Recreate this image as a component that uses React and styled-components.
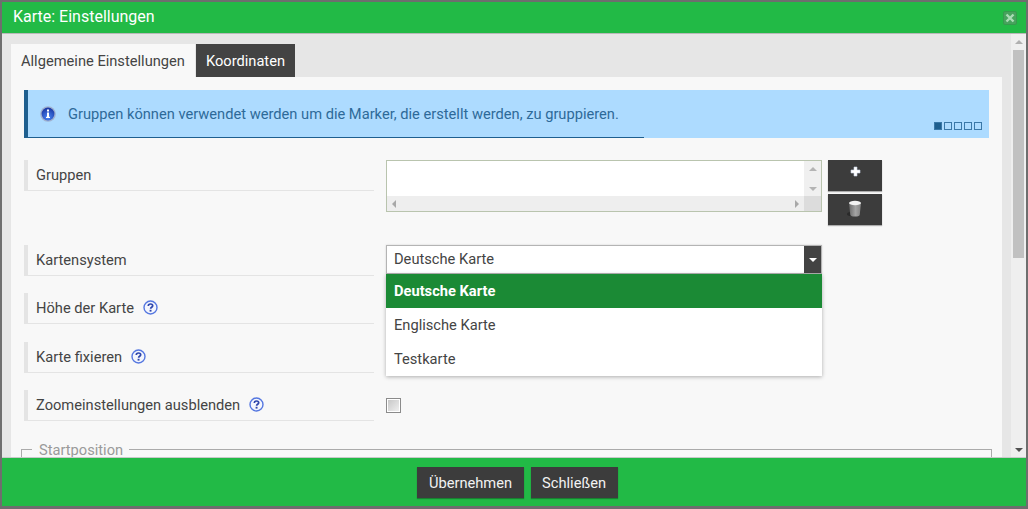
import styled, { createGlobalStyle } from "styled-components";

const GlobalStyle = createGlobalStyle`
html, body { margin: 0; padding: 0; height: 100%; overflow: hidden; }
* { box-sizing: border-box; }
body { font-family: Roboto, "Liberation Sans", sans-serif; font-size: 14.67px; color: #444; }
`

const Dialog = styled.div`
width: 1028px;
height: 509px;
display: flex;
flex-direction: column;
border: solid #6e6e6e;
border-width: 2px 2px 3px 2px;
overflow: hidden;
`

const TitleBar = styled.div`
height: 32px;
flex: none;
background: #22ba46;
border-bottom: 1px solid #b9b9b9;
color: #fff;
display: flex;
align-items: center;
justify-content: space-between;
padding: 0 9px 2px 11px;
font-size: 16px;
`

const CloseBox = styled.div`
width: 14px;
height: 14px;
margin-top: 2px;
border-radius: 2px;
background: #47a35d;
border: 1px solid #379a4e;
display: flex;
align-items: center;
justify-content: center;
`

const Middle = styled.div`
flex: 1;
min-height: 0;
display: flex;
`

const Content = styled.div`
flex: 1;
min-width: 0;
background: #e6e6e6;
padding: 10px 9px 0 9px;
overflow: hidden;
`

const Scrollbar = styled.div`
width: 15px;
flex: none;
background: #efefef;
display: flex;
flex-direction: column;
align-items: center;
`

const ScrollThumb = styled.div`
width: 11px;
height: 208px;
margin-top: 6px;
background: #c1c1c1;
`

const ScrollSpacer = styled.div`
flex: 1;
`

const ScrollUp = styled.div`
margin-top: 6px;
width: 0;
height: 0;
border: solid transparent;
border-width: 0 4px 4px 4px;
border-bottom-color: #b0b0b0;
`

const ScrollDown = styled.div`
margin-bottom: 5px;
width: 0;
height: 0;
border: solid transparent;
border-width: 4px 4px 0 4px;
border-top-color: #505050;
`

const Tabs = styled.div`
display: flex;
height: 33px;
`

const Tab = styled.div`
display: flex;
align-items: center;
padding: 0 10px;
margin-right: 1px;
background: ${({ $active }) => ($active ? "#f8f8f8" : "#434343")};
color: ${({ $active }) => ($active ? "#444" : "#fff")};
`

const Panel = styled.div`
background: #f8f8f8;
padding: 13px 13px 0 13px;
height: 420px;
`

const InfoBox = styled.div`
position: relative;
height: 48px;
background: #addbff;
border-left: 4px solid #1f5f8f;
color: #2d6a99;
display: flex;
align-items: center;
padding: 0 0 1px 12px;
gap: 12px;
`

const InfoProgress = styled.div`
position: absolute;
left: -4px;
bottom: 0;
width: 620px;
height: 1px;
background: #1f5f8f;
`

const Pager = styled.div`
position: absolute;
right: 7px;
bottom: 8px;
display: flex;
gap: 2px;
`

const PagerDot = styled.div`
width: 8px;
height: 8px;
border: 1px solid #3a78a8;
background: ${({ $active }) => ($active ? "#1f5f8f" : "transparent")};
`

const Row = styled.div`
display: flex;
align-items: flex-start;
gap: 12px;
margin-top: ${({ $top }) => $top}px;
`

const Label = styled.div`
width: 350px;
flex: none;
height: 31px;
border-left: 4px solid #e4e4e4;
border-bottom: 1px solid #e4e4e4;
padding: 0 0 1px 8px;
display: flex;
align-items: center;
gap: 9px;
color: #444;
`

const ListBox = styled.div`
width: 436px;
height: 52px;
border: 1px solid #b9c4ae;
background: #fff;
display: grid;
grid-template-columns: 1fr 17px;
grid-template-rows: 35px 15px;
`

const ListBody = styled.div`
background: #fff;
`

const VTrack = styled.div`
background: #f0f0f0;
display: flex;
flex-direction: column;
align-items: center;
justify-content: space-between;
padding: 6px 0 5px;
`

const HTrack = styled.div`
background: #eeeeee;
display: flex;
align-items: center;
justify-content: space-between;
padding: 0 5px;
`

const Corner = styled.div`
background: #dcdcdc;
`

const Arrow = styled.div`
width: 0;
height: 0;
border: solid transparent;
${({ $dir }) => $dir === "up" && "border-width: 0 4px 4px 4px; border-bottom-color: #b4b4b4;"}
${({ $dir }) => $dir === "down" && "border-width: 4px 4px 0 4px; border-top-color: #b4b4b4;"}
${({ $dir }) => $dir === "left" && "border-width: 4px 4px 4px 0; border-right-color: #a8a8a8;"}
${({ $dir }) => $dir === "right" && "border-width: 4px 0 4px 4px; border-left-color: #a8a8a8;"}
`

const ButtonStack = styled.div`
margin-left: -6px;
display: flex;
flex-direction: column;
gap: 3px;
`

const IconButton = styled.div`
width: 54px;
height: 31px;
background: #3c3c3c;
box-shadow: 0 1px 1px rgba(0, 0, 0, 0.3);
display: flex;
justify-content: center;
padding-top: ${({ $pt }) => $pt}px;
`

const SelectWrap = styled.div`
position: relative;
width: 436px;
`

const SelectBox = styled.div`
height: 29px;
border: 1px solid #b4b4b4;
background: #fff;
display: flex;
align-items: center;
justify-content: space-between;
padding-left: 7px;
box-shadow: 0 0 2px rgba(0, 0, 0, 0.15);
`

const SelectText = styled.span`
padding-bottom: 2px;
`

const SelectArrow = styled.div`
width: 17px;
height: 27px;
background: #434343;
display: flex;
align-items: center;
justify-content: center;
&::after {
    content: "";
    border: solid transparent;
    border-width: 4px 4px 0 4px;
    border-top-color: #fff;
}
`

const Menu = styled.div`
position: absolute;
left: 0;
right: 0;
top: 29px;
background: #fff;
box-shadow: 0 1px 4px rgba(0, 0, 0, 0.3);
z-index: 5;
`

const MenuItem = styled.div`
height: 34px;
display: flex;
align-items: center;
padding-left: 8px;
background: ${({ $active }) => ($active ? "#1b8a35" : "#fff")};
color: ${({ $active }) => ($active ? "#fff" : "#444")};
font-weight: ${({ $active }) => ($active ? 700 : 400)};
`

const Checkbox = styled.div`
width: 15px;
height: 15px;
margin-top: 8px;
border: 1px solid #8b8b8b;
background: linear-gradient(135deg, #c4c4c4, #f2f2f2);
box-shadow: inset 0 0 0 1px #fff;
`

const Fieldset = styled.div`
position: relative;
margin: 28px -3px 0 -3px;
height: 40px;
border: 1px solid #ababab;
`

const Legend = styled.div`
position: absolute;
top: -8px;
left: 10px;
padding: 0 6px 0 7px;
background: #f8f8f8;
color: #9a9a9a;
line-height: 17px;
`

const Footer = styled.div`
height: 49px;
flex: none;
background: #22ba46;
border-top: 1px solid #c9c9c9;
display: flex;
justify-content: center;
align-items: flex-start;
gap: 7px;
padding: 9px 0 0 7px;
`

const FooterButton = styled.div`
height: 31px;
display: flex;
align-items: center;
padding: 0 11.5px;
background: #3c3c3c;
color: #f2f2f2;
box-shadow: 0 1px 1px rgba(0, 0, 0, 0.3);
`

const InfoIcon = () => (
    <svg width="16" height="16" viewBox="0 0 16 16">
        <defs>
            <radialGradient id="orb" cx="50%" cy="75%" r="70%">
                <stop offset="0%" stopColor="#4a86f5" />
                <stop offset="100%" stopColor="#1c3aa6" />
            </radialGradient>
        </defs>
        <circle cx="8" cy="8" r="7.800" fill="#9fb0cf" />
        <circle cx="8" cy="8" r="6.400" fill="url(#orb)" />
        <rect x="7" y="3.500" width="2" height="2" fill="#fff" />
        <rect x="7" y="6.500" width="2" height="4.500" fill="#fff" />
        <rect x="6" y="10.800" width="4" height="1.200" fill="#fff" />
    </svg>
)

const HelpIcon = () => (
    <svg width="15" height="15" viewBox="0 0 15 15">
        <circle cx="7.500" cy="7.500" r="6.500" fill="#f4f6fd" stroke="#5577e0" strokeWidth="1.400" />
        <path d="M5.300 5.900c0-1.300 1-1.900 2.200-1.900 1.300 0 2.200.7 2.200 1.800 0 1.500-2.100 1.500-2.100 3" fill="none" stroke="#2f46ac" strokeWidth="1.700" />
        <rect x="6.600" y="9.800" width="1.900" height="1.800" fill="#2f46ac" />
    </svg>
)

const PlusIcon = () => (
    <svg width="11" height="11" viewBox="0 0 11 11">
        <path d="M4 1h3v3h3v3H7v3H4V7H1V4h3z" fill="#fff" stroke="#c6d2e4" strokeWidth="0.600" />
    </svg>
)

const TrashIcon = () => (
    <svg width="16" height="17" viewBox="0 0 16 17">
        <defs>
            <linearGradient id="bin" x1="0" y1="0" x2="1" y2="0">
                <stop offset="0%" stopColor="#6a6a6a" />
                <stop offset="55%" stopColor="#a4a4a4" />
                <stop offset="100%" stopColor="#828282" />
            </linearGradient>
        </defs>
        <ellipse cx="4" cy="14" rx="4" ry="2" fill="#2a2a2a" />
        <path d="M2 3h12l-1.300 12c-.1.8-1.200 1.500-4.700 1.500S3.400 15.800 3.300 15z" fill="url(#bin)" />
        <ellipse cx="8" cy="3" rx="6" ry="2.200" fill="#f2f2f2" />
    </svg>
)

const CloseIcon = () => (
    <svg width="10" height="10" viewBox="0 0 10 10">
        <path d="M1.500 1.500l7 7M8.500 1.500l-7 7" stroke="#a9dcb5" strokeWidth="2.400" />
    </svg>
)

const App = () => {
    return (
        <>
            <GlobalStyle />
            <Dialog>
                <TitleBar>
                    <span>Karte: Einstellungen</span>
                    <CloseBox><CloseIcon /></CloseBox>
                </TitleBar>
                <Middle>
                    <Content>
                        <Tabs>
                            <Tab $active>Allgemeine Einstellungen</Tab>
                            <Tab>Koordinaten</Tab>
                        </Tabs>
                        <Panel>
                            <InfoBox>
                                <InfoIcon />
                                <span>Gruppen können verwendet werden um die Marker, die erstellt werden, zu gruppieren.</span>
                                <InfoProgress />
                                <Pager>
                                    {[0, 1, 2, 3, 4].map((i) => <PagerDot key={i} $active={i === 0} />)}
                                </Pager>
                            </InfoBox>
                            <Row $top={22}>
                                <Label>Gruppen</Label>
                                <ListBox>
                                    <ListBody />
                                    <VTrack><Arrow $dir="up" /><Arrow $dir="down" /></VTrack>
                                    <HTrack><Arrow $dir="left" /><Arrow $dir="right" /></HTrack>
                                    <Corner />
                                </ListBox>
                                <ButtonStack>
                                    <IconButton $pt={6}><PlusIcon /></IconButton>
                                    <IconButton $pt={6}><TrashIcon /></IconButton>
                                </ButtonStack>
                            </Row>
                            <Row $top={20}>
                                <Label>Kartensystem</Label>
                                <SelectWrap>
                                    <SelectBox>
                                        <SelectText>Deutsche Karte</SelectText>
                                        <SelectArrow />
                                    </SelectBox>
                                    <Menu>
                                        <MenuItem $active>Deutsche Karte</MenuItem>
                                        <MenuItem>Englische Karte</MenuItem>
                                        <MenuItem>Testkarte</MenuItem>
                                    </Menu>
                                </SelectWrap>
                            </Row>
                            <Row $top={17}>
                                <Label>Höhe der Karte <HelpIcon /></Label>
                            </Row>
                            <Row $top={18}>
                                <Label>Karte fixieren <HelpIcon /></Label>
                            </Row>
                            <Row $top={17}>
                                <Label>Zoomeinstellungen ausblenden <HelpIcon /></Label>
                                <Checkbox />
                            </Row>
                            <Fieldset>
                                <Legend>Startposition</Legend>
                            </Fieldset>
                        </Panel>
                    </Content>
                    <Scrollbar>
                        <ScrollUp />
                        <ScrollThumb />
                        <ScrollSpacer />
                        <ScrollDown />
                    </Scrollbar>
                </Middle>
                <Footer>
                    <FooterButton>Übernehmen</FooterButton>
                    <FooterButton>Schließen</FooterButton>
                </Footer>
            </Dialog>
        </>
    )
}

export default App;
